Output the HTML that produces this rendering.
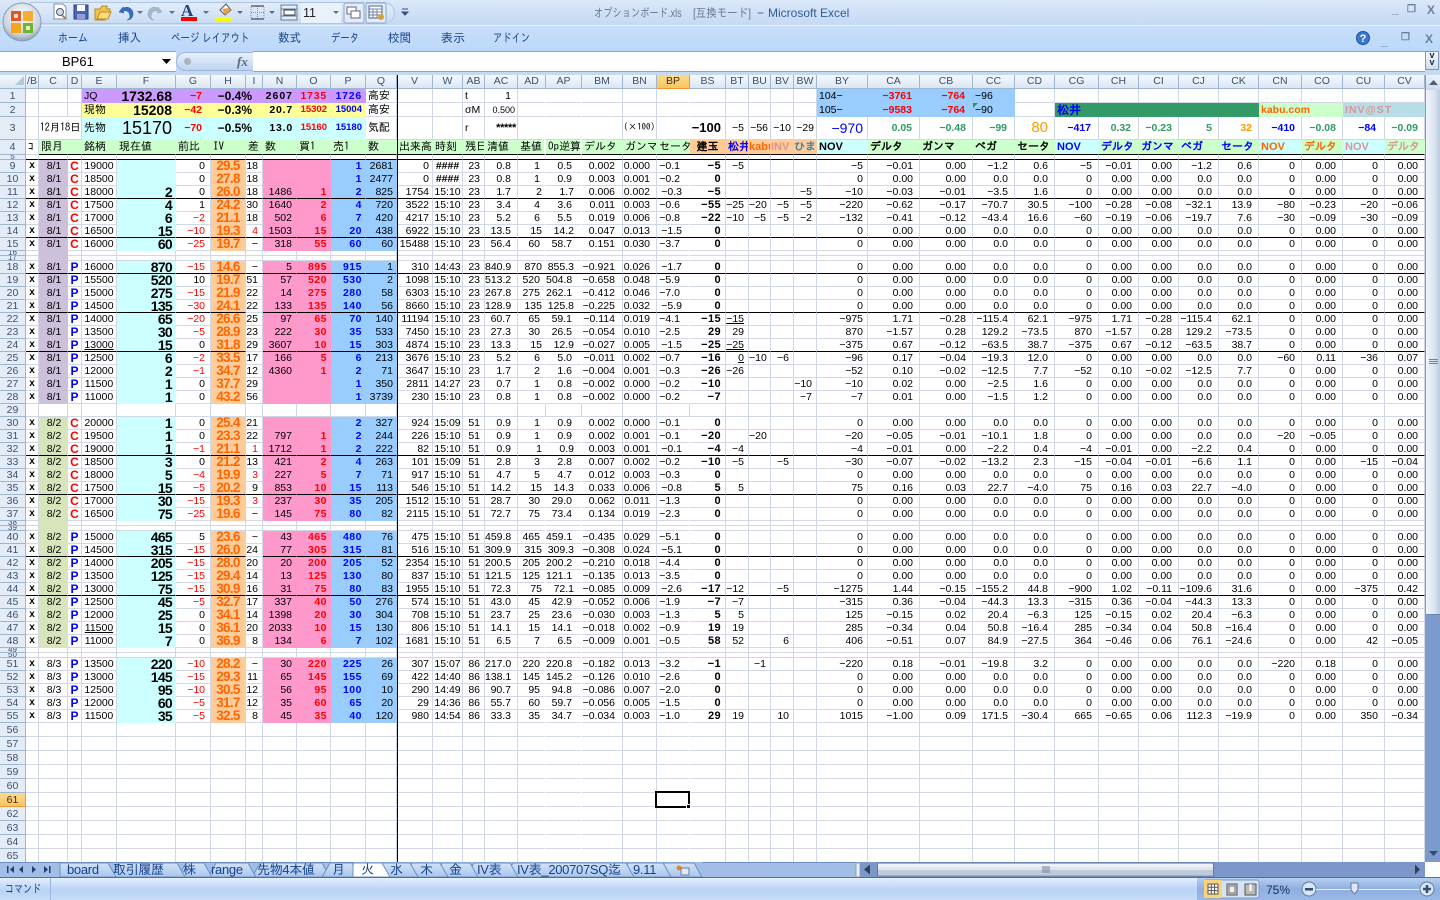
<!DOCTYPE html>
<html lang="ja"><head><meta charset="utf-8"><title>オプションボード.xls [互換モード] - Microsoft Excel</title>
<style>
html,body{margin:0;padding:0;width:1440px;height:900px;overflow:hidden;background:#fff}
body{position:relative;font-family:"Liberation Sans","IPAGothic","Noto Sans CJK JP",sans-serif;font-size:10.5px;color:#000}
.a{position:absolute}
#title{left:0;top:0;width:1440px;height:25px;background:linear-gradient(#dbe8f9,#cfe0f6 50%,#c6daf4)}
#rib{left:0;top:25px;width:1440px;height:26px;background:linear-gradient(#c9def8,#bcd8fb);border-top:1px solid #e6f0fc;box-sizing:border-box}
#qat{left:30px;top:2px;width:365px;height:22px;border-radius:0 12px 12px 0;background:linear-gradient(#e2edfa,#c9dcf4);border:1px solid #aec6e6;box-sizing:border-box}
.tb{top:31px;font-family:"Liberation Sans","IPAGothic","Noto Sans CJK JP",sans-serif;font-size:12px;color:#15428b;white-space:nowrap;line-height:14px;transform-origin:0 0}
.tt{top:6px;font-family:"Liberation Sans","IPAGothic","Noto Sans CJK JP",sans-serif;font-size:12px;color:#6a7a8c;white-space:nowrap;line-height:14px;transform-origin:0 0}
.wc{font-size:12px;color:#6a7f9c;font-weight:bold;line-height:14px}
#fbar{left:0;top:51px;width:1440px;height:24px;background:#c5d9f3}
#name{left:0;top:0;width:176px;height:19px;background:#fff;border-top:1px solid #8aa5c8;border-bottom:1px solid #8aa5c8}
#fx{left:253px;top:0;width:1172px;height:19px;background:#fff;border-top:1px solid #8aa5c8;border-bottom:1px solid #8aa5c8}
#pill{left:176px;top:1px;width:78px;height:19px;border-radius:10px 0 0 10px;background:linear-gradient(#e8f1fb,#bcd3f0);border:1px solid #9db6d6;box-sizing:border-box}
#wrap{left:0;top:75px;width:1425px;height:787px;overflow:hidden;background:#fff}
table{border-collapse:separate;border-spacing:0;table-layout:fixed;width:1425px}
td{box-sizing:border-box;height:13px;padding:0 3px 0 0;line-height:12px;white-space:nowrap;overflow:hidden;text-align:right;vertical-align:bottom;border-right:1px solid #d0d7e5;border-bottom:1px solid #d0d7e5}
td:first-child{background:#e4ecf7;border-right:1px solid #9eb6ce;border-bottom:1px solid #9eb6ce;text-align:center;padding:0;color:#3b5170}
tr.h td{height:14px;line-height:13px;background:linear-gradient(#f6f9fd,#dbe6f3);border-right:1px solid #9eb6ce;border-bottom:1px solid #9eb6ce;text-align:center;padding:0;color:#3b5170}
tr.h td.s,td.s:first-child{background:linear-gradient(#fbd98d,#f8c560);border-color:#f29536;color:#3b3020}
tr.t td{height:5px;line-height:4px;font-size:8px}
tr.e td{height:14px}
tr.r1 td{height:14px}tr.r3 td{height:23px;line-height:22px}tr.r4 td{height:15px;line-height:14px;font-size:11px;text-align:left;padding:0 0 0 2px;background:#cfc;border-color:transparent;font-family:"IPAGothic","Noto Sans CJK JP",sans-serif}
tr.r4 td:first-child{background:#e4ecf7;border-color:#9eb6ce;text-align:center;padding:0;font-family:"Liberation Sans",sans-serif;font-size:10.5px}
.d td:nth-child(2){text-align:center;padding:0;font-weight:bold;font-size:10px}
.d td:nth-child(3){text-align:center;padding:0 0 0 2px}
.d td:nth-child(4){text-align:center;padding:0;font-weight:bold;font-size:12px}
.d td:nth-child(5){text-align:center;padding:0}
.d td:nth-child(6){background:#cff;border-color:transparent;font-weight:bold;font-size:14px;letter-spacing:-.7px}
.d td:nth-child(7){padding-right:5px}
.d td:nth-child(8){background:#fc9;border-color:transparent;font-weight:bold;font-size:13.5px;letter-spacing:-.7px;color:#f60;text-align:center;padding:0}
.d td:nth-child(9){padding-right:4px}
.d td:nth-child(10){background:#f9c;border-color:transparent;padding-right:4px}
.d td:nth-child(11){background:#f9c;border-color:transparent;color:#f00;font-weight:bold;letter-spacing:.5px;font-size:10.5px}
.d td:nth-child(12){background:#9cf;border-color:transparent;color:#00f;font-weight:bold;letter-spacing:.5px;font-size:10.5px}
.d td:nth-child(13){background:#9cf;border-color:transparent}
.d td:nth-child(15){text-align:center;padding:0}
.d td:nth-child(16){padding-right:4px}.d td:nth-child(17){padding-right:6px}.d td:nth-child(18){padding-right:4px}.d td:nth-child(19){padding-right:8px}
.d td:nth-child(20){padding-right:7px}.d td:nth-child(21){padding-right:6px}.d td:nth-child(22){padding-right:8px}
.d td:nth-child(23){padding-right:4px;font-weight:bold;font-size:11px;letter-spacing:.4px}
.d td:nth-child(24),.d td:nth-child(25),.d td:nth-child(26),.d td:nth-child(27){padding-right:4px}
.d td:nth-child(28){padding-right:4px}.d td:nth-child(n+29){padding-right:6px}
.d td:nth-child(18),.d td:nth-child(19),.d td:nth-child(22),.e td:nth-child(18),.e td:nth-child(19),.e td:nth-child(22),.t td:nth-child(18),.t td:nth-child(19),.t td:nth-child(22),td.n{border-right:2px solid #fff}
tr.r4 td:nth-child(18),tr.r4 td:nth-child(19){border-right:2px solid #fff}
.p td:nth-child(3){background:#ccc0da;border-color:transparent}
.g td:nth-child(3){background:#d8e4bc;border-color:transparent}
.k td:nth-child(n+2){border-bottom-color:#000}
.k td:nth-child(18),.k td:nth-child(19),.k td:nth-child(22){border-right:0}
.kg td:nth-child(9){border-bottom-color:#d0d7e5}
.r{color:#f00!important}.b{color:#00f!important}
.lf{text-align:left!important;padding:0 0 0 2px!important}
.bo{font-weight:bold}
.fb{background:#9cf;border-color:transparent}
.y{background:#ff9;border-color:transparent}.pu{background:#c9f;border-color:transparent}.cy{background:#cff;border-color:transparent}
.big{font-weight:bold;font-size:14px}
.pc{font-weight:bold;font-size:12px;padding-right:10px}
.gr{color:#396;font-weight:bold}.or{color:#f90;font-weight:bold}
.jp{font-family:"IPAGothic","Noto Sans CJK JP",sans-serif;font-size:11px}
tr.r4 td.o{background:#fc9}tr.r4 td.c{background:#cff}tr.r4 td.w{background:#fff;border-color:#d0d7e5}
.ob{color:#f60!important}.pk{color:#d99694!important}.te{color:#3c87b0}
#vl{left:397px;top:75px;width:1px;height:787px;background:#000}
#sel{left:655px;top:791px;width:35px;height:17px;border:2px solid #000;box-sizing:border-box}
#sel i{position:absolute;right:-3px;bottom:-3px;background:#000;border:1px solid #fff;box-sizing:content-box;display:block;width:3px;height:3px}
#vs{left:1425px;top:75px;width:15px;height:787px;background:#7c9bcc}
#tabs{left:0;top:862px;width:1425px;height:15px;background:#a2bde6;overflow:hidden}
.st{top:862px;height:15px;line-height:15px;font-family:"Liberation Sans","IPAGothic","Noto Sans CJK JP",sans-serif;font-size:13px;color:#15428b;letter-spacing:-.3px;white-space:nowrap}
#stat{left:0;top:877px;width:1440px;height:23px;background:linear-gradient(#e3effc,#c9ddf8 35%,#b8d2f6 55%,#c8dcf8);border-top:1px solid #4f6f9e;box-sizing:border-box}
</style></head><body>
<div class="a" id="title"></div>
<div class="a" id="rib"></div>
<div class="a" id="qat"></div>
<svg class="a" style="left:0;top:0" width="420" height="46" viewBox="0 0 420 46">
<defs><radialGradient id="ob" cx=".5" cy=".35" r=".7"><stop offset="0" stop-color="#fff"/><stop offset=".7" stop-color="#c9d3e0"/><stop offset="1" stop-color="#7d8ea6"/></radialGradient></defs>
<circle cx="22" cy="22" r="19" fill="url(#ob)" stroke="#8a9bb3"/>
<rect x="11" y="11" width="10" height="10" fill="#e8541c"/><rect x="23" y="11" width="10" height="10" fill="#f7a41d" opacity=".9"/><rect x="11" y="23" width="10" height="10" fill="#f7a41d"/><rect x="23" y="23" width="10" height="10" fill="#6fb52c"/>
<path d="M14 14h4v4h-4zM26 26h4v4h-4z" fill="#fff" opacity=".8"/>
<path d="M54 4h9l3 3v12H54z" fill="#fff" stroke="#7d8ea6"/><circle cx="60" cy="12" r="3.5" fill="#cde" stroke="#556"/><path d="M62 15l4 4" stroke="#a86" stroke-width="2"/>
<path d="M74 5h14v14H74z" fill="#4a62b8" stroke="#33407a"/><rect x="77" y="5" width="8" height="6" fill="#fff"/><rect x="77" y="14" width="8" height="5" fill="#8fa0d8"/>
<path d="M95 9h5l2-3h5v3h3v3h-2l-3 8H95z" fill="#f2c14e" stroke="#b98a22"/><path d="M97 19l3-7h11l-3 7z" fill="#ffdc78" stroke="#b98a22"/>
<path d="M123 7l-4 5 5 1-1-2c4-1 7 1 7 6-1 2-2 3-3 3 4 0 6-3 6-6 0-6-6-8-9-6z" fill="#2f6fc5" stroke="#1f4e94" stroke-width=".5"/>
<path d="M158 7l4 5-5 1 1-2c-4-1-7 1-7 6 1 2 2 3 3 3-4 0-6-3-6-6 0-6 6-8 9-6z" fill="#a9b8cc" stroke="#8fa0b8" stroke-width=".5"/>
<g fill="#5a6f90"><path d="M137 11h6l-3 3zM169 11h6l-3 3zM203 11h6l-3 3zM237 11h6l-3 3zM269 11h6l-3 3zM333 11h6l-3 3z"/></g>
<text x="181" y="16" font-family="Liberation Serif" font-weight="bold" font-size="17" fill="#1f3f78">A</text><rect x="181" y="17" width="16" height="4" fill="#f00"/>
<path d="M220 10l6-6 5 6-6 5z" fill="#fff" stroke="#556"/><path d="M222 9l6-1 3 2-6 5z" fill="#e9a33d"/><rect x="216" y="17" width="16" height="4" fill="#ff0"/>
<path d="M251 6h13v13h-13zM257.500 6v13M251 12.500h13" fill="none" stroke="#8294ad" stroke-dasharray="1 1"/><path d="M251 6h13" stroke="#222"/><path d="M251 19h13" stroke="#222"/>
<rect x="281" y="5" width="16" height="15" fill="#e9eef5" stroke="#667a96"/><rect x="284" y="10" width="11" height="5" fill="#fff" stroke="#345"/><path d="M281 9h16M281 16h16" stroke="#667a96"/>
<rect x="301" y="3" width="40" height="20" fill="#e9f1fb"/><text x="303" y="17" font-family="Liberation Sans" font-size="12.500" fill="#222">11</text>
<path d="M333 11h6l-3 3z" fill="#5a6f90"/>
<rect x="344" y="3" width="20" height="20" rx="2" fill="#e3ecf8" stroke="#8ea6c6"/><rect x="347" y="7" width="9" height="7" fill="#fff" stroke="#667"/><rect x="351" y="11" width="9" height="7" fill="#fff" stroke="#667"/>
<rect x="366" y="3" width="20" height="20" rx="2" fill="#e3ecf8" stroke="#8ea6c6"/><rect x="369" y="6" width="13" height="12" fill="#fff" stroke="#48648c"/><path d="M369 9h13M373 9v9M377 9v9M369 12h13M369 15h13" stroke="#48648c" stroke-width=".7"/><circle cx="381" cy="17" r="3" fill="#d7a23a"/>
<path d="M402 9h6M402 12h6l-3 3z" fill="#33507d" stroke="#33507d"/>
</svg>
<div class="a tt" style="left:594px;transform:scaleX(.77)">オプションボード.xls</div>
<div class="a tt" style="left:693px;transform:scaleX(.87)">[互換モード]</div>
<div class="a tt" style="left:757px;color:#2f5c9a">−</div>
<div class="a tt" style="left:768px;color:#2f5c9a">Microsoft Excel</div>
<div class="a wc" style="left:1392px;top:2px">_</div><div class="a wc" style="left:1407px;top:3px;font-size:10px">❐</div><div class="a wc" style="left:1427px;top:3px">X</div>
<div class="a tb" style="left:58px;transform:scaleX(.83)">ホーム</div><div class="a tb" style="left:118px;transform:scaleX(.96)">挿入</div><div class="a tb" style="left:171px;transform:scaleX(.79)">ページ レイアウト</div><div class="a tb" style="left:278px;transform:scaleX(.96)">数式</div><div class="a tb" style="left:331px;transform:scaleX(.78)">データ</div><div class="a tb" style="left:388px;transform:scaleX(.96)">校閲</div><div class="a tb" style="left:441px">表示</div><div class="a tb" style="left:493px;transform:scaleX(.77)">アドイン</div>
<svg class="a" style="left:1355px;top:30px" width="16" height="16"><circle cx="8" cy="8" r="6.500" fill="#3b78d0" stroke="#20509c"/><text x="8" y="12" font-size="11" font-weight="bold" fill="#fff" text-anchor="middle" font-family="Liberation Sans">?</text></svg>
<div class="a wc" style="left:1381px;top:34px">_</div><div class="a wc" style="left:1401px;top:31px;font-size:10px">❐</div><div class="a wc" style="left:1425px;top:32px">X</div>
<div class="a" id="fbar">
<div class="a" id="name"><span class="a" style="left:62px;top:2px;font-size:13px;line-height:15px">BP61</span><svg class="a" style="left:162px;top:7px" width="9" height="5"><path d="M0 0h9L4.500 5z" fill="#000"/></svg></div>
<div class="a" id="pill"><svg class="a" style="left:5px;top:3px" width="11" height="11"><circle cx="5.500" cy="5.500" r="4" fill="#a9b4c2" stroke="#d7dee8"/></svg><span class="a" style="left:60px;top:1px;font-family:'Liberation Serif';font-style:italic;font-weight:bold;font-size:13px;color:#5a6a80;line-height:15px">fx</span></div>
<div class="a" id="fx"></div>
<div class="a" style="left:1425px;top:0;width:14px;height:19px;background:linear-gradient(#f4f8fd,#cfdcee);border:1px solid #7f97b8;box-sizing:border-box;font-size:9px;line-height:7px;text-align:center;font-weight:bold;color:#1a2a40">v<br>v</div>
</div>
<div class="a" id="wrap"><table>
<colgroup><col width="26"><col width="13"><col width="29"><col width="14"><col width="35"><col width="59"><col width="35"><col width="35"><col width="17"><col width="34"><col width="34"><col width="35"><col width="31"><col width="36"><col width="30"><col width="22"><col width="33"><col width="28"><col width="36"><col width="41"><col width="34"><col width="33"><col width="36"><col width="23"><col width="22"><col width="23"><col width="23"><col width="51"><col width="52"><col width="53"><col width="42"><col width="40"><col width="44"><col width="40"><col width="40"><col width="40"><col width="40"><col width="43"><col width="41"><col width="42"><col width="40"></colgroup>
<tr class="h"><td><svg width="9" height="9" style="position:relative;left:7px;top:1px"><path d="M9 0v9H0z" fill="#b6c7dc"/></svg><td>/B<td>C<td>D<td>E<td>F<td>G<td>H<td>I<td>N<td>O<td>P<td>Q<td>V<td>W<td>AB<td>AC<td>AD<td>AP<td>BM<td>BN<td class="s">BP<td>BS<td>BT<td>BU<td>BV<td>BW<td>BY<td>CA<td>CB<td>CC<td>CD<td>CG<td>CH<td>CI<td>CJ<td>CK<td>CN<td>CO<td>CU<td>CV
<tr class="r1"><td>1<td><td><td><td class="pu lf">JQ<td class="pu big">1732.68<td class="pu r bo" style="padding-right:8px">−7<td class="pu pc" colspan="2">−0.4%<td class="pu bo" style="letter-spacing:1px">2607<td class="pu r bo" style="letter-spacing:.8px">1735<td class="pu b bo" style="letter-spacing:.8px">1726<td class="lf jp">高安<td><td><td class="lf">t<td style="padding-right:6px">1<td class="n"><td class="n"><td><td><td class="n"><td><td><td><td><td><td class="fb lf">104−<td class="fb r bo" style="padding-right:7px">−3761<td class="fb r bo" style="padding-right:7px">−764<td class="fb lf">−96<td><td><td><td><td><td><td><td><td><td>
<tr class="r1"><td>2<td><td><td><td class="y lf jp">現物<td class="y big">15208<td class="y r bo" style="padding-right:8px">−42<td class="y pc" colspan="2">−0.3%<td class="y bo" style="letter-spacing:.8px">20.7<td class="y r bo" style="font-size:9.500px">15302<td class="y b bo" style="font-size:9.500px">15004<td class="lf jp">高安<td><td><td class="lf">σM<td style="font-size:9px;padding-right:2px">0.500<td class="n"><td class="n"><td><td><td class="n"><td><td><td><td><td><td class="fb lf">105−<td class="fb r bo" style="padding-right:7px">−9583<td class="fb r bo" style="padding-right:7px">−764<td class="fb lf">−90<td><td class="bo lf" colspan="5" style="background:#396;border-color:transparent;color:#00f;font-size:12px;font-family:'IPAGothic','Noto Sans CJK JP',sans-serif">松井<td class="bo lf ob" colspan="2" style="background:#cfc;border-color:transparent">kabu.com<td class="bo lf pk" colspan="2" style="background:#b7dee8;border-color:transparent;letter-spacing:1px">INV@ST
<tr class="r3"><td>3<td><td colspan="2" class="jp" style="text-align:center;padding:0;font-size:10.500px;letter-spacing:-.2px">12月18日<td class="cy lf jp">先物<td class="cy" style="font-size:18px">15170<td class="cy r bo" style="padding-right:8px">−70<td class="cy pc" colspan="2">−0.5%<td class="cy bo" style="letter-spacing:.8px">13.0<td class="cy r bo" style="font-size:9.500px">15160<td class="cy b bo" style="font-size:9.500px">15180<td class="lf jp">気配<td><td><td class="lf">r<td class="bo" style="padding-right:1px;font-size:11px;letter-spacing:-.3px">*****<td class="n"><td class="n"><td><td class="jp" style="font-size:9px;padding-right:1px">(×100)<td class="n"><td class="bo" style="font-size:13px;padding-right:4px">−100<td style="padding-right:4px">−5<td style="padding-right:2px">−56<td style="padding-right:2px">−10<td style="padding-right:2px">−29<td class="b" style="font-size:14px;padding-right:4px">−970<td class="gr" style="padding-right:7px">0.05<td class="gr" style="padding-right:6px">−0.48<td class="gr" style="padding-right:7px">−99<td class="or" style="font-size:15px;font-weight:normal;padding-right:6px">80<td class="b bo" style="padding-right:7px">−417<td class="gr" style="padding-right:7px">0.32<td class="gr" style="padding-right:6px">−0.23<td class="gr" style="padding-right:6px">5<td class="or" style="padding-right:6px">32<td class="b bo" style="padding-right:6px">−410<td class="gr" style="padding-right:6px">−0.08<td class="b bo" style="padding-right:8px">−84<td class="gr" style="padding-right:6px">−0.09
<tr class="r4 k"><td>4<td class="w">ｺ<td>限月<td><td>銘柄<td>現在値<td>前比<td>IV<td>差<td>数<td>買1<td>売1<td>数<td>出来高<td>時刻<td>残日<td>清値<td>基値<td>Op逆算<td>デルタ<td>ガンマ<td>セータ<td class="o bo" style="text-align:center;padding:0">建玉<td class="o b bo">松井<td class="o ob bo" style="font-family:'Liberation Sans';padding-left:0">kabu<td class="o pk bo" style="padding-left:0;font-family:'Liberation Sans'">INV<td class="o te bo" style="padding-left:0">ひま<td class="c bo" style="font-family:'Liberation Sans'">NOV<td class="bo">デルタ<td class="bo">ガンマ<td class="bo">ベガ<td class="bo">セータ<td class="c b bo" style="font-family:'Liberation Sans'">NOV<td class="b bo">デルタ<td class="b bo">ガンマ<td class="b bo">ベガ<td class="b bo">セータ<td class="c ob bo" style="font-family:'Liberation Sans'">NOV<td class="ob bo">デルタ<td class="c pk bo" style="font-family:'Liberation Sans'">NOV<td class="pk bo">デルタ
<tr class="t k"><td>5<td><td><td><td><td><td><td><td><td><td><td><td><td><td><td><td><td><td><td><td><td><td><td><td><td><td><td><td><td><td><td><td><td><td><td><td><td><td><td><td>
<tr class="d p"><td>9<td>x<td>8/1<td class="r">C<td>19000<td><td>0<td>29.5<td>18<td><td><td>1<td>2681<td>0<td class="bo">####<td>23<td>0.8<td>1<td>0.5<td>0.002<td>0.000<td>−0.1<td>−5<td>−5<td><td><td><td>−5<td>−0.01<td>0.00<td>−1.2<td>0.6<td>−5<td>−0.01<td>0.00<td>−1.2<td>0.6<td>0<td>0.00<td>0<td>0.00
<tr class="d p"><td>10<td>x<td>8/1<td class="r">C<td>18500<td><td>0<td>27.8<td>18<td><td><td>1<td>2477<td>0<td class="bo">####<td>23<td>0.8<td>1<td>0.9<td>0.003<td>0.001<td>−0.2<td>0<td><td><td><td><td>0<td>0.00<td>0.00<td>0.0<td>0.0<td>0<td>0.00<td>0.00<td>0.0<td>0.0<td>0<td>0.00<td>0<td>0.00
<tr class="d p k"><td>11<td>x<td>8/1<td class="r">C<td>18000<td>2<td>0<td>26.0<td>18<td>1486<td>1<td>2<td>825<td>1754<td>15:10<td>23<td>1.7<td>2<td>1.7<td>0.006<td>0.002<td>−0.3<td>−5<td><td><td><td>−5<td>−10<td>−0.03<td>−0.01<td>−3.5<td>1.6<td>0<td>0.00<td>0.00<td>0.0<td>0.0<td>0<td>0.00<td>0<td>0.00
<tr class="d p"><td>12<td>x<td>8/1<td class="r">C<td>17500<td>4<td>1<td>24.2<td>30<td>1640<td>2<td>4<td>720<td>3522<td>15:10<td>23<td>3.4<td>4<td>3.6<td>0.011<td>0.003<td>−0.6<td>−55<td>−25<td>−20<td>−5<td>−5<td>−220<td>−0.62<td>−0.17<td>−70.7<td>30.5<td>−100<td>−0.28<td>−0.08<td>−32.1<td>13.9<td>−80<td>−0.23<td>−20<td>−0.06
<tr class="d p"><td>13<td>x<td>8/1<td class="r">C<td>17000<td>6<td class="r">−2<td>21.1<td>18<td>502<td>6<td>7<td>420<td>4217<td>15:10<td>23<td>5.2<td>6<td>5.5<td>0.019<td>0.006<td>−0.8<td>−22<td>−10<td>−5<td>−5<td>−2<td>−132<td>−0.41<td>−0.12<td>−43.4<td>16.6<td>−60<td>−0.19<td>−0.06<td>−19.7<td>7.6<td>−30<td>−0.09<td>−30<td>−0.09
<tr class="d p k"><td>14<td>x<td>8/1<td class="r">C<td>16500<td>15<td class="r">−10<td>19.3<td class="r">4<td>1503<td>15<td>20<td>438<td>6922<td>15:10<td>23<td>13.5<td>15<td>14.2<td>0.047<td>0.013<td>−1.5<td>0<td><td><td><td><td>0<td>0.00<td>0.00<td>0.0<td>0.0<td>0<td>0.00<td>0.00<td>0.0<td>0.0<td>0<td>0.00<td>0<td>0.00
<tr class="d p"><td>15<td>x<td>8/1<td class="r">C<td>16000<td>60<td class="r">−25<td>19.7<td>−<td>318<td>55<td>60<td>60<td>15488<td>15:10<td>23<td>56.4<td>60<td>58.7<td>0.151<td>0.030<td>−3.7<td>0<td><td><td><td><td>0<td>0.00<td>0.00<td>0.0<td>0.0<td>0<td>0.00<td>0.00<td>0.0<td>0.0<td>0<td>0.00<td>0<td>0.00
<tr class="t p"><td>16<td><td><td><td><td><td><td><td><td><td><td><td><td><td><td><td><td><td><td><td><td><td><td><td><td><td><td><td><td><td><td><td><td><td><td><td><td><td><td><td>
<tr class="t p"><td>17<td><td><td><td><td><td><td><td><td><td><td><td><td><td><td><td><td><td><td><td><td><td><td><td><td><td><td><td><td><td><td><td><td><td><td><td><td><td><td><td>
<tr class="d p k"><td>18<td>x<td>8/1<td class="b">P<td>16000<td>870<td class="r">−15<td>14.6<td>−<td>5<td>895<td>915<td>1<td>310<td>14:43<td>23<td>840.9<td>870<td>855.3<td>−0.921<td>0.026<td>−1.7<td>0<td><td><td><td><td>0<td>0.00<td>0.00<td>0.0<td>0.0<td>0<td>0.00<td>0.00<td>0.0<td>0.0<td>0<td>0.00<td>0<td>0.00
<tr class="d p"><td>19<td>x<td>8/1<td class="b">P<td>15500<td>520<td>10<td>19.7<td>51<td>57<td>520<td>530<td>2<td>1098<td>15:10<td>23<td>513.2<td>520<td>504.8<td>−0.658<td>0.048<td>−5.9<td>0<td><td><td><td><td>0<td>0.00<td>0.00<td>0.0<td>0.0<td>0<td>0.00<td>0.00<td>0.0<td>0.0<td>0<td>0.00<td>0<td>0.00
<tr class="d p"><td>20<td>x<td>8/1<td class="b">P<td>15000<td>275<td class="r">−15<td>21.9<td>22<td>14<td>275<td>280<td>58<td>6303<td>15:10<td>23<td>267.8<td>275<td>262.1<td>−0.412<td>0.046<td>−7.0<td>0<td><td><td><td><td>0<td>0.00<td>0.00<td>0.0<td>0.0<td>0<td>0.00<td>0.00<td>0.0<td>0.0<td>0<td>0.00<td>0<td>0.00
<tr class="d p k kg"><td>21<td>x<td>8/1<td class="b">P<td>14500<td>135<td class="r">−30<td>24.1<td>22<td>133<td>135<td>140<td>56<td>8660<td>15:10<td>23<td>128.9<td>135<td>125.8<td>−0.225<td>0.032<td>−5.9<td>0<td><td><td><td><td>0<td>0.00<td>0.00<td>0.0<td>0.0<td>0<td>0.00<td>0.00<td>0.0<td>0.0<td>0<td>0.00<td>0<td>0.00
<tr class="d p"><td>22<td>x<td>8/1<td class="b">P<td>14000<td>65<td class="r">−20<td>26.6<td>25<td>97<td>65<td>70<td>140<td>11194<td>15:10<td>23<td>60.7<td>65<td>59.1<td>−0.114<td>0.019<td>−4.1<td>−15<td><u>−15</u><td><td><td><td>−975<td>1.71<td>−0.28<td>−115.4<td>62.1<td>−975<td>1.71<td>−0.28<td>−115.4<td>62.1<td>0<td>0.00<td>0<td>0.00
<tr class="d p"><td>23<td>x<td>8/1<td class="b">P<td>13500<td>30<td class="r">−5<td>28.9<td>23<td>222<td>30<td>35<td>533<td>7450<td>15:10<td>23<td>27.3<td>30<td>26.5<td>−0.054<td>0.010<td>−2.5<td>29<td>29<td><td><td><td>870<td>−1.57<td>0.28<td>129.2<td>−73.5<td>870<td>−1.57<td>0.28<td>129.2<td>−73.5<td>0<td>0.00<td>0<td>0.00
<tr class="d p k kg"><td>24<td>x<td>8/1<td class="b">P<td><u>13000</u><td>15<td>0<td>31.8<td>29<td>3607<td>10<td>15<td>303<td>4874<td>15:10<td>23<td>13.3<td>15<td>12.9<td>−0.027<td>0.005<td>−1.5<td>−25<td><u>−25</u><td><td><td><td>−375<td>0.67<td>−0.12<td>−63.5<td>38.7<td>−375<td>0.67<td>−0.12<td>−63.5<td>38.7<td>0<td>0.00<td>0<td>0.00
<tr class="d p"><td>25<td>x<td>8/1<td class="b">P<td>12500<td>6<td class="r">−2<td>33.5<td>17<td>166<td>5<td>6<td>213<td>3676<td>15:10<td>23<td>5.2<td>6<td>5.0<td>−0.011<td>0.002<td>−0.7<td>−16<td><u>0</u><td>−10<td>−6<td><td>−96<td>0.17<td>−0.04<td>−19.3<td>12.0<td>0<td>0.00<td>0.00<td>0.0<td>0.0<td>−60<td>0.11<td>−36<td>0.07
<tr class="d p"><td>26<td>x<td>8/1<td class="b">P<td>12000<td>2<td class="r">−1<td>34.7<td>12<td>4360<td>1<td>2<td>71<td>3647<td>15:10<td>23<td>1.7<td>2<td>1.6<td>−0.004<td>0.001<td>−0.3<td>−26<td>−26<td><td><td><td>−52<td>0.10<td>−0.02<td>−12.5<td>7.7<td>−52<td>0.10<td>−0.02<td>−12.5<td>7.7<td>0<td>0.00<td>0<td>0.00
<tr class="d p"><td>27<td>x<td>8/1<td class="b">P<td>11500<td>1<td>0<td>37.7<td>29<td><td><td>1<td>350<td>2811<td>14:27<td>23<td>0.7<td>1<td>0.8<td>−0.002<td>0.000<td>−0.2<td>−10<td><td><td><td>−10<td>−10<td>0.02<td>0.00<td>−2.5<td>1.6<td>0<td>0.00<td>0.00<td>0.0<td>0.0<td>0<td>0.00<td>0<td>0.00
<tr class="d p"><td>28<td>x<td>8/1<td class="b">P<td>11000<td>1<td>0<td>43.2<td>56<td><td><td>1<td>3739<td>230<td>15:10<td>23<td>0.8<td>1<td>0.8<td>−0.002<td>0.000<td>−0.2<td>−7<td><td><td><td>−7<td>−7<td>0.01<td>0.00<td>−1.5<td>1.2<td>0<td>0.00<td>0.00<td>0.0<td>0.0<td>0<td>0.00<td>0<td>0.00
<tr><td>29<td><td><td><td><td><td><td><td><td><td><td><td><td><td><td><td><td><td><td><td><td><td><td><td><td><td><td><td><td><td><td><td><td><td><td><td><td><td><td><td>
<tr class="d g"><td>30<td>x<td>8/2<td class="r">C<td>20000<td>1<td>0<td>25.4<td>21<td><td><td>2<td>327<td>924<td>15:09<td>51<td>0.9<td>1<td>0.9<td>0.002<td>0.000<td>−0.1<td>0<td><td><td><td><td>0<td>0.00<td>0.00<td>0.0<td>0.0<td>0<td>0.00<td>0.00<td>0.0<td>0.0<td>0<td>0.00<td>0<td>0.00
<tr class="d g"><td>31<td>x<td>8/2<td class="r">C<td>19500<td>1<td>0<td>23.3<td>22<td>797<td>1<td>2<td>244<td>226<td>15:10<td>51<td>0.9<td>1<td>0.9<td>0.002<td>0.001<td>−0.1<td>−20<td><td>−20<td><td><td>−20<td>−0.05<td>−0.01<td>−10.1<td>1.8<td>0<td>0.00<td>0.00<td>0.0<td>0.0<td>−20<td>−0.05<td>0<td>0.00
<tr class="d g k"><td>32<td>x<td>8/2<td class="r">C<td>19000<td>1<td class="r">−1<td>21.1<td class="r">1<td>1712<td>1<td>2<td>222<td>82<td>15:10<td>51<td>0.9<td>1<td>0.9<td>0.003<td>0.001<td>−0.1<td>−4<td>−4<td><td><td><td>−4<td>−0.01<td>0.00<td>−2.2<td>0.4<td>−4<td>−0.01<td>0.00<td>−2.2<td>0.4<td>0<td>0.00<td>0<td>0.00
<tr class="d g"><td>33<td>x<td>8/2<td class="r">C<td>18500<td>3<td>0<td>21.2<td>13<td>421<td>2<td>4<td>263<td>101<td>15:09<td>51<td>2.8<td>3<td>2.8<td>0.007<td>0.002<td>−0.2<td>−10<td>−5<td><td>−5<td><td>−30<td>−0.07<td>−0.02<td>−13.2<td>2.3<td>−15<td>−0.04<td>−0.01<td>−6.6<td>1.1<td>0<td>0.00<td>−15<td>−0.04
<tr class="d g"><td>34<td>x<td>8/2<td class="r">C<td>18000<td>5<td class="r">−4<td>19.9<td class="r">3<td>227<td>5<td>7<td>71<td>917<td>15:10<td>51<td>4.7<td>5<td>4.7<td>0.012<td>0.003<td>−0.3<td>0<td><td><td><td><td>0<td>0.00<td>0.00<td>0.0<td>0.0<td>0<td>0.00<td>0.00<td>0.0<td>0.0<td>0<td>0.00<td>0<td>0.00
<tr class="d g k"><td>35<td>x<td>8/2<td class="r">C<td>17500<td>15<td class="r">−5<td>20.2<td>9<td>853<td>10<td>15<td>113<td>546<td>15:10<td>51<td>14.2<td>15<td>14.3<td>0.033<td>0.006<td>−0.8<td>5<td>5<td><td><td><td>75<td>0.16<td>0.03<td>22.7<td>−4.0<td>75<td>0.16<td>0.03<td>22.7<td>−4.0<td>0<td>0.00<td>0<td>0.00
<tr class="d g"><td>36<td>x<td>8/2<td class="r">C<td>17000<td>30<td class="r">−15<td>19.3<td class="r">3<td>237<td>30<td>35<td>205<td>1512<td>15:10<td>51<td>28.7<td>30<td>29.0<td>0.062<td>0.011<td>−1.3<td>0<td><td><td><td><td>0<td>0.00<td>0.00<td>0.0<td>0.0<td>0<td>0.00<td>0.00<td>0.0<td>0.0<td>0<td>0.00<td>0<td>0.00
<tr class="d g"><td>37<td>x<td>8/2<td class="r">C<td>16500<td>75<td class="r">−25<td>19.6<td>−<td>145<td>75<td>80<td>82<td>2115<td>15:10<td>51<td>72.7<td>75<td>73.4<td>0.134<td>0.019<td>−2.3<td>0<td><td><td><td><td>0<td>0.00<td>0.00<td>0.0<td>0.0<td>0<td>0.00<td>0.00<td>0.0<td>0.0<td>0<td>0.00<td>0<td>0.00
<tr class="t g"><td>38<td><td><td><td><td><td><td><td><td><td><td><td><td><td><td><td><td><td><td><td><td><td><td><td><td><td><td><td><td><td><td><td><td><td><td><td><td><td><td><td>
<tr class="t g"><td>39<td><td><td><td><td><td><td><td><td><td><td><td><td><td><td><td><td><td><td><td><td><td><td><td><td><td><td><td><td><td><td><td><td><td><td><td><td><td><td><td>
<tr class="d g"><td>40<td>x<td>8/2<td class="b">P<td>15000<td>465<td>5<td>23.6<td>−<td>43<td>465<td>480<td>76<td>475<td>15:10<td>51<td>459.8<td>465<td>459.1<td>−0.435<td>0.029<td>−5.1<td>0<td><td><td><td><td>0<td>0.00<td>0.00<td>0.0<td>0.0<td>0<td>0.00<td>0.00<td>0.0<td>0.0<td>0<td>0.00<td>0<td>0.00
<tr class="d g k kg"><td>41<td>x<td>8/2<td class="b">P<td>14500<td>315<td class="r">−15<td>26.0<td>24<td>77<td>305<td>315<td>81<td>516<td>15:10<td>51<td>309.9<td>315<td>309.3<td>−0.308<td>0.024<td>−5.1<td>0<td><td><td><td><td>0<td>0.00<td>0.00<td>0.0<td>0.0<td>0<td>0.00<td>0.00<td>0.0<td>0.0<td>0<td>0.00<td>0<td>0.00
<tr class="d g"><td>42<td>x<td>8/2<td class="b">P<td>14000<td>205<td class="r">−15<td>28.0<td>20<td>20<td>200<td>205<td>52<td>2354<td>15:10<td>51<td>200.5<td>205<td>200.2<td>−0.210<td>0.018<td>−4.4<td>0<td><td><td><td><td>0<td>0.00<td>0.00<td>0.0<td>0.0<td>0<td>0.00<td>0.00<td>0.0<td>0.0<td>0<td>0.00<td>0<td>0.00
<tr class="d g"><td>43<td>x<td>8/2<td class="b">P<td>13500<td>125<td class="r">−15<td>29.4<td>14<td>13<td>125<td>130<td>80<td>837<td>15:10<td>51<td>121.5<td>125<td>121.1<td>−0.135<td>0.013<td>−3.5<td>0<td><td><td><td><td>0<td>0.00<td>0.00<td>0.0<td>0.0<td>0<td>0.00<td>0.00<td>0.0<td>0.0<td>0<td>0.00<td>0<td>0.00
<tr class="d g k"><td>44<td>x<td>8/2<td class="b">P<td>13000<td>75<td class="r">−15<td>30.9<td>16<td>31<td>75<td>80<td>83<td>1955<td>15:10<td>51<td>72.3<td>75<td>72.1<td>−0.085<td>0.009<td>−2.6<td>−17<td>−12<td><td>−5<td><td>−1275<td>1.44<td>−0.15<td>−155.2<td>44.8<td>−900<td>1.02<td>−0.11<td>−109.6<td>31.6<td>0<td>0.00<td>−375<td>0.42
<tr class="d g"><td>45<td>x<td>8/2<td class="b">P<td>12500<td>45<td class="r">−5<td>32.7<td>17<td>337<td>40<td>50<td>276<td>574<td>15:10<td>51<td>43.0<td>45<td>42.9<td>−0.052<td>0.006<td>−1.9<td>−7<td>−7<td><td><td><td>−315<td>0.36<td>−0.04<td>−44.3<td>13.3<td>−315<td>0.36<td>−0.04<td>−44.3<td>13.3<td>0<td>0.00<td>0<td>0.00
<tr class="d g"><td>46<td>x<td>8/2<td class="b">P<td>12000<td>25<td>0<td>34.1<td>14<td>1398<td>20<td>30<td>304<td>708<td>15:10<td>51<td>23.7<td>25<td>23.6<td>−0.030<td>0.003<td>−1.3<td>5<td>5<td><td><td><td>125<td>−0.15<td>0.02<td>20.4<td>−6.3<td>125<td>−0.15<td>0.02<td>20.4<td>−6.3<td>0<td>0.00<td>0<td>0.00
<tr class="d g"><td>47<td>x<td>8/2<td class="b">P<td><u>11500</u><td>15<td>0<td>36.1<td>20<td>2033<td>10<td>15<td>130<td>806<td>15:10<td>51<td>14.1<td>15<td>14.1<td>−0.018<td>0.002<td>−0.9<td>19<td>19<td><td><td><td>285<td>−0.34<td>0.04<td>50.8<td>−16.4<td>285<td>−0.34<td>0.04<td>50.8<td>−16.4<td>0<td>0.00<td>0<td>0.00
<tr class="d g"><td>48<td>x<td>8/2<td class="b">P<td>11000<td>7<td>0<td>36.9<td>8<td>134<td>6<td>7<td>102<td>1681<td>15:10<td>51<td>6.5<td>7<td>6.5<td>−0.009<td>0.001<td>−0.5<td>58<td>52<td><td>6<td><td>406<td>−0.51<td>0.07<td>84.9<td>−27.5<td>364<td>−0.46<td>0.06<td>76.1<td>−24.6<td>0<td>0.00<td>42<td>−0.05
<tr class="t"><td>49<td><td><td><td><td><td><td><td><td><td><td><td><td><td><td><td><td><td><td><td><td><td><td><td><td><td><td><td><td><td><td><td><td><td><td><td><td><td><td><td>
<tr class="t"><td>50<td><td><td><td><td><td><td><td><td><td><td><td><td><td><td><td><td><td><td><td><td><td><td><td><td><td><td><td><td><td><td><td><td><td><td><td><td><td><td><td>
<tr class="d"><td>51<td>x<td>8/3<td class="b">P<td>13500<td>220<td class="r">−10<td>28.2<td>−<td>30<td>220<td>225<td>26<td>307<td>15:07<td>86<td>217.0<td>220<td>220.8<td>−0.182<td>0.013<td>−3.2<td>−1<td><td>−1<td><td><td>−220<td>0.18<td>−0.01<td>−19.8<td>3.2<td>0<td>0.00<td>0.00<td>0.0<td>0.0<td>−220<td>0.18<td>0<td>0.00
<tr class="d"><td>52<td>x<td>8/3<td class="b">P<td>13000<td>145<td class="r">−15<td>29.3<td>11<td>65<td>145<td>155<td>69<td>422<td>14:40<td>86<td>138.1<td>145<td>145.2<td>−0.126<td>0.010<td>−2.6<td>0<td><td><td><td><td>0<td>0.00<td>0.00<td>0.0<td>0.0<td>0<td>0.00<td>0.00<td>0.0<td>0.0<td>0<td>0.00<td>0<td>0.00
<tr class="d"><td>53<td>x<td>8/3<td class="b">P<td>12500<td>95<td class="r">−10<td>30.5<td>12<td>56<td>95<td>100<td>10<td>290<td>14:49<td>86<td>90.7<td>95<td>94.8<td>−0.086<td>0.007<td>−2.0<td>0<td><td><td><td><td>0<td>0.00<td>0.00<td>0.0<td>0.0<td>0<td>0.00<td>0.00<td>0.0<td>0.0<td>0<td>0.00<td>0<td>0.00
<tr class="d"><td>54<td>x<td>8/3<td class="b">P<td>12000<td>60<td class="r">−5<td>31.7<td>12<td>35<td>60<td>65<td>20<td>29<td>14:36<td>86<td>55.7<td>60<td>59.7<td>−0.056<td>0.005<td>−1.5<td>0<td><td><td><td><td>0<td>0.00<td>0.00<td>0.0<td>0.0<td>0<td>0.00<td>0.00<td>0.0<td>0.0<td>0<td>0.00<td>0<td>0.00
<tr class="d"><td>55<td>x<td>8/3<td class="b">P<td>11500<td>35<td class="r">−5<td>32.5<td>8<td>45<td>35<td>40<td>120<td>980<td>14:54<td>86<td>33.3<td>35<td>34.7<td>−0.034<td>0.003<td>−1.0<td>29<td>19<td><td>10<td><td>1015<td>−1.00<td>0.09<td>171.5<td>−30.4<td>665<td>−0.65<td>0.06<td>112.3<td>−19.9<td>0<td>0.00<td>350<td>−0.34
<tr class="e"><td>56<td><td><td><td><td><td><td><td><td><td><td><td><td><td><td><td><td><td><td><td><td><td><td><td><td><td><td><td><td><td><td><td><td><td><td><td><td><td><td><td>
<tr class="e"><td>57<td><td><td><td><td><td><td><td><td><td><td><td><td><td><td><td><td><td><td><td><td><td><td><td><td><td><td><td><td><td><td><td><td><td><td><td><td><td><td><td>
<tr class="e"><td>58<td><td><td><td><td><td><td><td><td><td><td><td><td><td><td><td><td><td><td><td><td><td><td><td><td><td><td><td><td><td><td><td><td><td><td><td><td><td><td><td>
<tr class="e"><td>59<td><td><td><td><td><td><td><td><td><td><td><td><td><td><td><td><td><td><td><td><td><td><td><td><td><td><td><td><td><td><td><td><td><td><td><td><td><td><td><td>
<tr class="e"><td>60<td><td><td><td><td><td><td><td><td><td><td><td><td><td><td><td><td><td><td><td><td><td><td><td><td><td><td><td><td><td><td><td><td><td><td><td><td><td><td><td>
<tr class="e"><td class="s">61<td><td><td><td><td><td><td><td><td><td><td><td><td><td><td><td><td><td><td><td><td><td><td><td><td><td><td><td><td><td><td><td><td><td><td><td><td><td><td><td>
<tr class="e"><td>62<td><td><td><td><td><td><td><td><td><td><td><td><td><td><td><td><td><td><td><td><td><td><td><td><td><td><td><td><td><td><td><td><td><td><td><td><td><td><td><td>
<tr class="e"><td>63<td><td><td><td><td><td><td><td><td><td><td><td><td><td><td><td><td><td><td><td><td><td><td><td><td><td><td><td><td><td><td><td><td><td><td><td><td><td><td><td>
<tr class="e"><td>64<td><td><td><td><td><td><td><td><td><td><td><td><td><td><td><td><td><td><td><td><td><td><td><td><td><td><td><td><td><td><td><td><td><td><td><td><td><td><td><td>
<tr class="e"><td>65<td><td><td><td><td><td><td><td><td><td><td><td><td><td><td><td><td><td><td><td><td><td><td><td><td><td><td><td><td><td><td><td><td><td><td><td><td><td><td><td>
</table></div>
<div class="a" id="vl"></div>
<svg class="a" style="left:973px;top:103px" width="6" height="6"><path d="M0 0h5L0 5z" fill="#4f8a3c"/></svg>
<div class="a" id="sel"><i></i></div>
<div class="a" id="vs">
<div class="a" style="left:1px;top:0;width:14px;height:15px;background:linear-gradient(#eef3fa,#cbd8ea)"><svg class="a" style="left:3px;top:5px" width="9" height="5"><path d="M4.500 0L9 5H0z" fill="#4a5f80"/></svg></div>
<div class="a" style="left:1px;top:15px;width:14px;height:525px;background:linear-gradient(90deg,#f2f6fb,#dbe4f1 60%,#bccadf);border-bottom:1px solid #6b84ab;box-sizing:border-box"><svg class="a" style="left:3px;top:269px" width="9" height="6"><path d="M0 .5h9M0 2.500h9M0 4.500h9" stroke="#6f829e"/></svg></div>
<svg class="a" style="left:4px;top:776px" width="9" height="5"><path d="M0 0h9L4.500 5z" fill="#33496b"/></svg>
</div>
<div class="a" id="tabs"><svg width="1425" height="15" style="position:absolute;left:0;top:0"><defs><linearGradient id="t" x1="0" y1="0" x2="0" y2="1"><stop offset="0" stop-color="#d2e2f8"/><stop offset="1" stop-color="#a9c6ef"/></linearGradient></defs>
<g fill="url(#t)" stroke="#6f90c0"><path d="M702 15l-8-14H664l-1 14z"/><path d="M671 15l-8-14H628l-6 14z"/><path d="M634 15l-8-14H513l-8 14z"/><path d="M518 15l-8-14H474l-7 14z"/><path d="M478 15l-8-14h-28l-7 14z"/><path d="M448 15l-8-14h-28l-7 14z"/><path d="M418 15l-8-14h-28l-7 14z"/><path d="M330 15l-8-14h-62l-8 14z"/><path d="M256 15l-8-14h-32l-8 14z"/><path d="M212 15l-8-14h-18l-8 14z"/><path d="M185 15l-8-14h-58l-8 14z"/><path d="M116 15l-8-14H60v14z"/><path d="M358 15l-6-14h-22l-8 14z"/></g>
<path d="M390 15l-8-14H353v14z" fill="#fff" stroke="#6f90c0"/><path d="M0 .5H353M702 .5h723" stroke="#6f90c0"/>
<g fill="#1d3f73"><path d="M7 4v7h1.500V4zM14 4l-4 3.500 4 3.500zM23 4l-4 3.500 4 3.500zM32 4l4 3.500-4 3.500zM44 4l4 3.500-4 3.500zM49 4v7h1.500V4z"/></g>
<circle cx="679" cy="6" r="2.500" fill="#e08a1e"/><rect x="681" y="6" width="8" height="7" fill="#dfe8f4" stroke="#6c7f9c"/>
<rect x="856" y="1" width="4" height="14" fill="#e9eff8" stroke="#8aa"/><rect x="860" y="0" width="565" height="15" fill="#7c97c9"/><path d="M864 7.500l6-5v10z" fill="#2f3f5c"/><rect x="877.500" y="1" width="336" height="13" fill="#dfe5ee" stroke="#667a96"/><rect x="878" y="2" width="335" height="3" fill="#eef2f8"/><rect x="878" y="8" width="335" height="5" fill="#bfcbda"/><path d="M1043 4v7M1045 4v7M1047 4v7M1049 4v7" stroke="#6f7f96"/><path d="M1420 7.500l-5-5v10z" fill="#2f3f5c"/>
</svg></div>
<div class="a st" style="left:67px">board</div><div class="a st" style="left:113px">取引履歴</div><div class="a st" style="left:183px">株</div><div class="a st" style="left:211px">range</div><div class="a st" style="left:257px">先物4本値</div><div class="a st" style="left:332px">月</div><div class="a st" style="left:361px">火</div><div class="a st" style="left:390px">水</div><div class="a st" style="left:420px">木</div><div class="a st" style="left:449px">金</div><div class="a st" style="left:477px">IV表</div><div class="a st" style="left:517px">IV表_200707SQ迄</div><div class="a st" style="left:633px">9.11</div>
<div class="a" id="stat">
<span class="a" style="left:5px;top:4px;font-family:'Liberation Sans','IPAGothic','Noto Sans CJK JP',sans-serif;font-size:12px;color:#15428b;line-height:14px;transform:scaleX(.75);transform-origin:0 0;white-space:nowrap">コマンド</span>
<div class="a" style="left:50px;top:0;width:1px;height:22px;background:#9ab6dd"></div>
<div class="a" style="left:1197px;top:0;width:243px;height:22px;background:linear-gradient(#b6cff2,#8fafe0 50%,#9ab9e6)"></div>
<svg class="a" style="left:1204px;top:1px" width="236" height="21"><rect x="0" y="1" width="55" height="18" rx="2" fill="#d6e3f5" stroke="#7f9bc6"/><rect x="0" y="1" width="18" height="18" fill="#fbd37a"/><path d="M4 5h10v10H4zM4 8.300h10M4 11.600h10M7.300 5v10M10.600 5v10" fill="#fff" stroke="#555"/><rect x="23" y="5" width="10" height="11" fill="#ccc" stroke="#555"/><rect x="25" y="7" width="6" height="7" fill="#eee" stroke="#777"/><rect x="41" y="5" width="11" height="11" fill="#bbb" stroke="#555"/><path d="M46.500 5v7" stroke="#fff" stroke-width="2"/>
<text x="62" y="15" font-family="Liberation Sans" font-size="12" fill="#15325f">75%</text>
<circle cx="105" cy="10" r="7" fill="#dbe6f5" stroke="#5f7aa4"/><rect x="101" y="9" width="8" height="2.500" fill="#334e76"/>
<path d="M112 10.500h106" stroke="#e6eefb"/><path d="M149.500 6v9" stroke="#e6eefb"/><path d="M147 4h7v7l-3.500 4-3.500-4z" fill="#dde7f5" stroke="#5f7aa4"/>
<circle cx="223" cy="10" r="7" fill="#dbe6f5" stroke="#5f7aa4"/><path d="M219 10h8M223 6v8" stroke="#334e76" stroke-width="2.500"/></svg>
</div>
</body></html>
